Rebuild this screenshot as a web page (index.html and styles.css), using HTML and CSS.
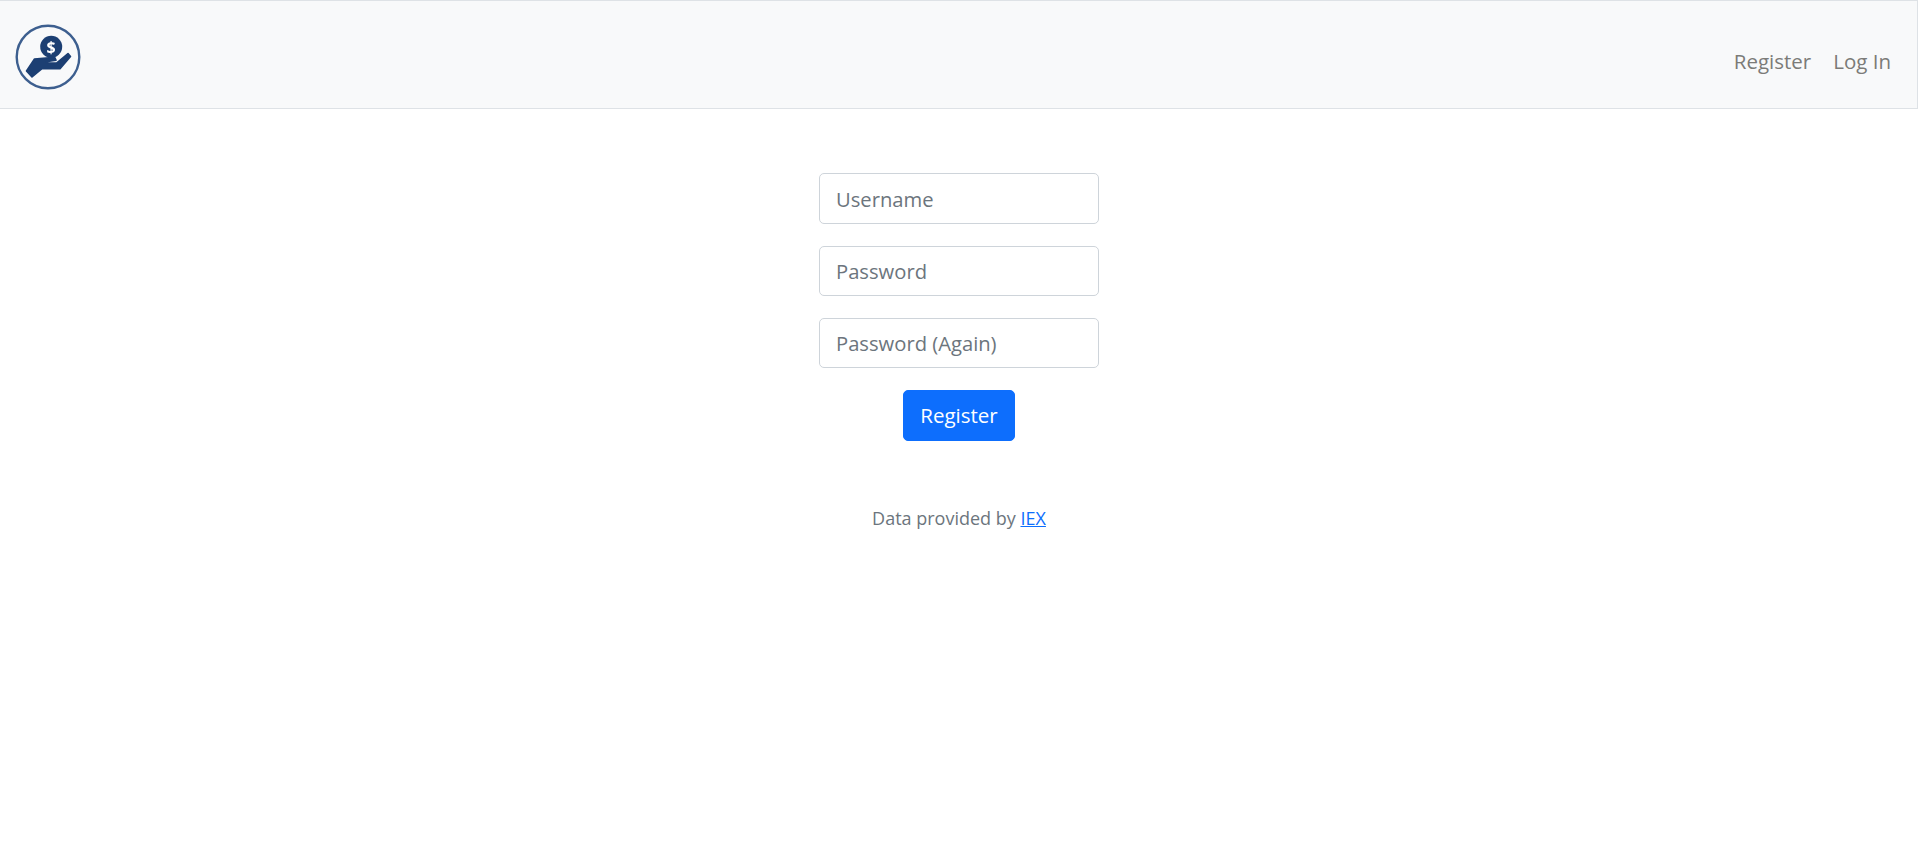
FILE: index.html
```html
<!DOCTYPE html>
<html lang="en">
<head>
<meta charset="utf-8">
<title>Register</title>
<link rel="stylesheet" href="styles.css">
</head>
<body>
<nav class="navbar">
  <a class="brand" href="#" aria-label="Home">
    <svg class="logo" width="66" height="66" viewBox="0 0 66 66">
      <circle cx="33" cy="33" r="31.300" fill="none" stroke="#3d5f8f" stroke-width="2.400"/>
      <circle cx="36.200" cy="22.700" r="11" fill="#1c3f73"/>
      <path d="M11.500 47 L19.500 35 L39.500 33.200 L41 36.200 L31 37.700 L31 39 L41.500 39 L53 29.500 L55.500 32.500 L45 44.700 L27 44.700 L17 53 Z" fill="#1c3f73" stroke="#1c3f73" stroke-width="1.600" stroke-linejoin="round"/>
      <text class="dollar" x="36.200" y="28.500" text-anchor="middle">$</text>
    </svg>
  </a>
  <ul class="nav-links">
    <li><a class="nav-link" href="#">Register</a></li>
    <li><a class="nav-link" href="#">Log In</a></li>
  </ul>
</nav>
<main class="main">
  <form class="form">
    <input class="field field-tall" type="text" placeholder="Username">
    <input class="field" type="password" placeholder="Password">
    <input class="field" type="password" placeholder="Password (Again)">
    <button class="btn" type="button">Register</button>
  </form>
</main>
<footer class="footer">Data provided by <a href="#">IEX</a></footer>
</body>
</html>
```

FILE: styles.css
```css
* { box-sizing: border-box; }
html, body { margin: 0; padding: 0; }
body {
  background: #fff;
  color: #212529;
  font-family: "Open Sans", "Noto Sans", sans-serif;
  font-size: 20.2px;
}
.navbar {
  height: 109px;
  display: flex;
  align-items: center;
  justify-content: space-between;
  background: #f8f9fa;
  border: 1px solid #dee2e6;
  border-left: 0;
  padding: 0 26px 0 15px;
}
.brand { display: flex; margin-top: 5px; }
.logo { display: block; filter: blur(0.4px); }
.dollar { font-size: 16px; font-weight: 700; fill: #fff; font-family: "Open Sans", sans-serif; }
.nav-links {
  display: flex;
  list-style: none;
  margin: 13px 0 0;
  padding: 0;
  gap: 22px;
}
.nav-link {
  color: #7b7b78;
  text-decoration: none;
  font-size: 20.5px;
  line-height: 30px;
}
.main {
  padding-top: 64px;
  display: flex;
  justify-content: center;
}
.form {
  width: 280px;
  display: flex;
  flex-direction: column;
  align-items: center;
}
.field {
  width: 100%;
  height: 50px;
  margin-bottom: 22px;
  padding: 0 16px;
  font: inherit;
  color: #212529;
  background: #fff;
  border: 1px solid #ced4da;
  border-radius: 5px;
  outline: none;
}
.field-tall { height: 51px; padding-top: 1px; }
.field::placeholder { color: #6c757d; opacity: 1; }
.btn {
  width: 112px;
  height: 51px;
  padding: 0 0 2px;
  font: inherit;
  font-size: 20.5px;
  color: #fff;
  background: #0d6efd;
  border: 1px solid #0d6efd;
  border-radius: 5px;
}
.footer {
  margin-top: 64px;
  text-align: center;
  font-size: 18px;
  line-height: 27px;
  color: #6c757d;
}
.footer a { color: #0d6efd; }
```
